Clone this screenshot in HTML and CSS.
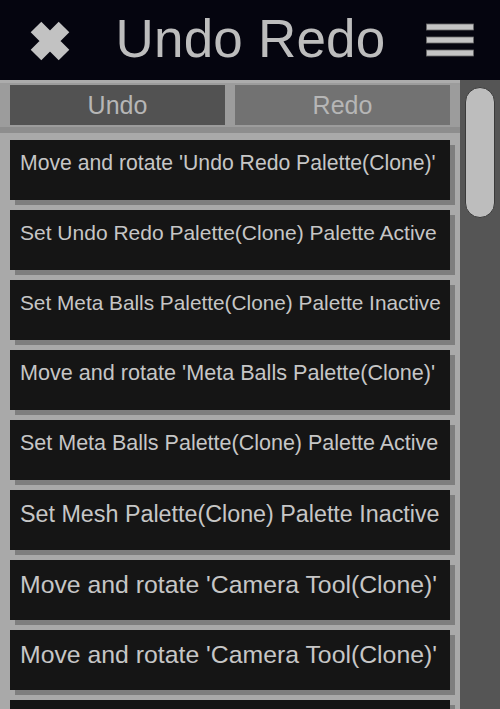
FILE: index.html
```html
<!DOCTYPE html>
<html lang="en">
<head>
<meta charset="utf-8">
<title>Undo Redo</title>
<link rel="stylesheet" href="styles.css">
</head>
<body>
<div class="app">
  <header class="topbar">
    <button class="icon-btn close" aria-label="Close">
      <svg width="42" height="42" viewBox="0 0 42 42">
        <path d="M7 7 L35 35 M35 7 L7 35" stroke="#c2c2c2" stroke-width="15" stroke-linecap="butt" stroke-linejoin="round" fill="none"/>
      </svg>
    </button>
    <h1 class="title">Undo Redo</h1>
    <button class="icon-btn menu" aria-label="Menu">
      <svg width="48" height="34" viewBox="0 0 48 34">
        <rect x="0.5" y="1" width="47" height="6" fill="#c4c4c4" stroke="#6a6a6a" stroke-width="0.8"/>
        <rect x="0.5" y="14" width="47" height="6" fill="#c4c4c4" stroke="#6a6a6a" stroke-width="0.8"/>
        <rect x="0.5" y="27" width="47" height="6" fill="#c4c4c4" stroke="#6a6a6a" stroke-width="0.8"/>
      </svg>
    </button>
  </header>
  <main class="content">
    <section class="panel">
      <div class="tabs">
        <button class="tab tab-active">Undo</button>
        <button class="tab">Redo</button>
      </div>
      <ul class="list">
        <li class="item"><span class="label fs-a">Move and rotate 'Undo Redo Palette(Clone)'</span></li>
        <li class="item"><span class="label fs-b">Set Undo Redo Palette(Clone) Palette Active</span></li>
        <li class="item"><span class="label fs-c">Set Meta Balls Palette(Clone) Palette Inactive</span></li>
        <li class="item"><span class="label fs-d">Move and rotate 'Meta Balls Palette(Clone)'</span></li>
        <li class="item"><span class="label fs-e">Set Meta Balls Palette(Clone) Palette Active</span></li>
        <li class="item"><span class="label fs-f">Set Mesh Palette(Clone) Palette Inactive</span></li>
        <li class="item"><span class="label fs-g">Move and rotate 'Camera Tool(Clone)'</span></li>
        <li class="item"><span class="label fs-g">Move and rotate 'Camera Tool(Clone)'</span></li>
        <li class="item"></li>
      </ul>
    </section>
    <div class="scrolltrack">
      <div class="thumb"></div>
    </div>
  </main>
</div>
</body>
</html>
```
FILE: styles.css
```css
* { box-sizing: border-box; }
html, body {
  margin: 0;
  padding: 0;
  width: 500px;
  height: 709px;
  overflow: hidden;
  background: #05050f;
  font-family: "Liberation Sans", Arial, sans-serif;
}
.app {
  width: 500px;
  height: 709px;
  display: flex;
  flex-direction: column;
}
.topbar {
  height: 80px;
  flex: none;
  background: #05050f;
  display: flex;
  align-items: center;
  justify-content: space-between;
  padding: 0 26px 0 29px;
}
.icon-btn {
  background: none;
  border: 0;
  padding: 0;
  margin: 0;
  display: flex;
}
.close { margin-top: 2px; }
.menu { margin-top: -1px; }
.title {
  margin: 0;
  font-weight: normal;
  font-size: 53px;
  color: #bdbdbd;
  line-height: 1;
  margin-top: -3px;
  margin-left: 4px;
  letter-spacing: 0.2px;
}
.content {
  flex: 1;
  display: flex;
  min-height: 0;
}
.panel {
  width: 460px;
  flex: none;
  background: #a9a9a9;
  display: flex;
  flex-direction: column;
  overflow: hidden;
}
.tabs {
  flex: none;
  height: 53px;
  background: #9c9c9c;
  border-top: 3px solid #acacac;
  border-bottom: 6px solid #8d8d8d;
  display: flex;
  gap: 10px;
  padding: 2px 10px 0;
}
.tab {
  width: 215px;
  height: 40px;
  border: 0;
  margin: 0;
  padding: 0;
  background: #727272;
  color: #b6b6b6;
  font-family: "Liberation Sans", Arial, sans-serif;
  font-size: 25px;
}
.tab-active { background: #525252; }
.list {
  list-style: none;
  margin: 0;
  padding: 7px 0 0 10px;
  display: flex;
  flex-direction: column;
  gap: 10px;
}
.item {
  flex: none;
  width: 440px;
  height: 60px;
  background: #151515;
  box-shadow: 5px 5px 0 #7e7e7e;
  padding: 11px 0 0 10px;
  color: #c6c6c6;
  white-space: nowrap;
}
.label { display: block; line-height: 1.15; }
.fs-a { font-size: 21.2px; }
.fs-b { font-size: 21.0px; }
.fs-c { font-size: 20.8px; }
.fs-d { font-size: 21.6px; }
.fs-e { font-size: 21.5px; }
.fs-f { font-size: 23.3px; }
.fs-g { font-size: 24.8px; }
.scrolltrack {
  flex: 1;
  background: #555555;
  padding: 7px 5px 0 5px;
}
.thumb {
  width: 30px;
  height: 131px;
  background: #bdbdbd;
  border: 1px solid #3a3a3a;
  border-radius: 15px;
}
```
